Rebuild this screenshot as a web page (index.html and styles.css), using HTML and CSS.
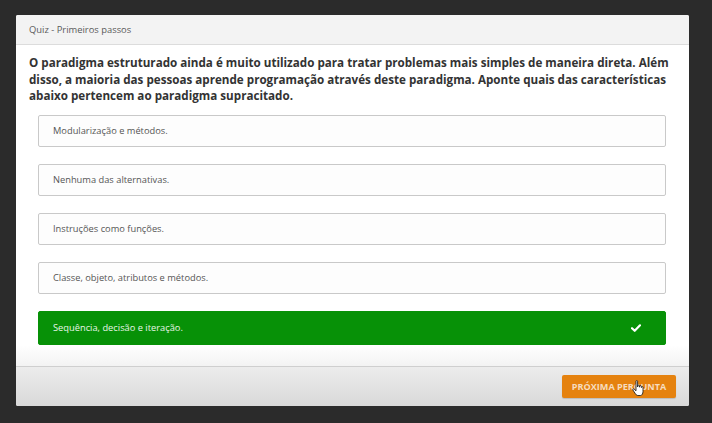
FILE: index.html
```html
<!DOCTYPE html>
<html lang="pt">
<head>
<meta charset="utf-8">
<title>Quiz - Primeiros passos</title>
<link rel="stylesheet" href="styles.css">
</head>
<body>
<div class="panel">
  <div class="panel-header">Quiz - Primeiros passos</div>
  <div class="panel-body">
    <p class="question">O paradigma estruturado ainda é muito utilizado para tratar problemas mais simples de maneira direta. Além disso, a maioria das pessoas aprende programação através deste paradigma. Aponte quais das características abaixo pertencem ao paradigma supracitado.</p>
    <div class="options">
      <div class="option">Modularização e métodos.</div>
      <div class="option">Nenhuma das alternativas.</div>
      <div class="option">Instruções como funções.</div>
      <div class="option">Classe, objeto, atributos e métodos.</div>
      <div class="option correct"><span>Sequência, decisão e iteração.</span>
        <svg class="check" width="10" height="8" viewBox="0 0 10 8"><path d="M1 4.2 L3.7 6.8 L9 1.3" fill="none" stroke="#fff" stroke-width="2.2" stroke-linecap="round" stroke-linejoin="round"/></svg>
      </div>
    </div>
  </div>
  <div class="panel-footer">
    <button class="next">PRÓXIMA PERGUNTA
      <svg class="cursor" width="14" height="17" viewBox="0 0 14 17"><path d="M4 1.2 C4 0.4 5.6 0.4 5.6 1.2 L5.6 7 L5.8 5.6 C5.9 4.9 7.3 4.9 7.4 5.6 L7.5 7.2 L7.7 6.2 C7.8 5.5 9.2 5.5 9.3 6.2 L9.4 7.6 L9.6 7 C9.8 6.4 11 6.5 11 7.2 L11 11.5 C11 13.5 10 15.5 8.5 15.5 L5.8 15.5 C4.6 15.5 3.8 14.4 3 13.2 L0.9 10 C0.4 9.2 1.4 8.4 2.1 9 L4 10.8 Z" fill="#fff" stroke="#222" stroke-width="0.9" stroke-linejoin="round"/></svg>
    </button>
  </div>
</div>
</body>
</html>
```

FILE: styles.css
```css
html, body {
  margin: 0;
  padding: 0;
}
body {
  background: #2b2b2b;
  width: 712px;
  height: 423px;
  box-sizing: border-box;
  padding: 15px 23px 17px 16px;
  font-family: "Open Sans", "Liberation Sans", sans-serif;
  overflow: hidden;
}
.panel {
  height: 391px;
  background: #fff;
  display: flex;
  flex-direction: column;
  border-radius: 2px;
  overflow: hidden;
}
.panel-header {
  height: 29px;
  border-bottom: 1px solid #dcdcdc;
  background: #f3f3f3;
  color: #5a5a5a;
  font-size: 9.4px;
  line-height: 30px;
  padding-left: 13px;
  flex-shrink: 0;
}
.panel-body {
  flex: 1;
  padding: 10px 8px 0 13px;
  background: linear-gradient(to bottom, #fff 0, #fff 300px, #f3f3f3 100%);
}
.question {
  margin: 0;
  font-weight: 700;
  font-size: 11.65px;
  line-height: 16.5px;
  color: #333;
}
.options {
  margin: 10px 15px 0 9px;
  display: flex;
  flex-direction: column;
  gap: 17px;
}
.option {
  height: 30px;
  border: 1px solid #c9c9c9;
  border-radius: 2px;
  background: #fdfdfd;
  color: #555;
  font-size: 9.3px;
  padding-left: 14px;
  padding-right: 24px;
  display: flex;
  align-items: center;
  justify-content: space-between;
}
.option.correct {
  height: 32px;
  background: #079107;
  border-color: #079107;
  color: #e8f5e8;
}
.check {
  display: block;
}
.panel-footer {
  height: 39px;
  border-top: 1px solid #cfcfcf;
  background: linear-gradient(to bottom, #ececec, #d9d9d9);
  display: flex;
  align-items: center;
  justify-content: flex-end;
  padding-right: 13px;
  flex-shrink: 0;
}
.next {
  position: relative;
  width: 114px;
  height: 23px;
  border: none;
  border-radius: 2px;
  background: #e5820f;
  color: #f6dcbf;
  font-family: "Open Sans", "Liberation Sans", sans-serif;
  font-weight: 700;
  font-size: 9.1px;
  padding: 0;
  box-shadow: 0 1px 1px rgba(0,0,0,0.15);
}
.cursor {
  position: absolute;
  left: 70px;
  top: 5px;
}
```
